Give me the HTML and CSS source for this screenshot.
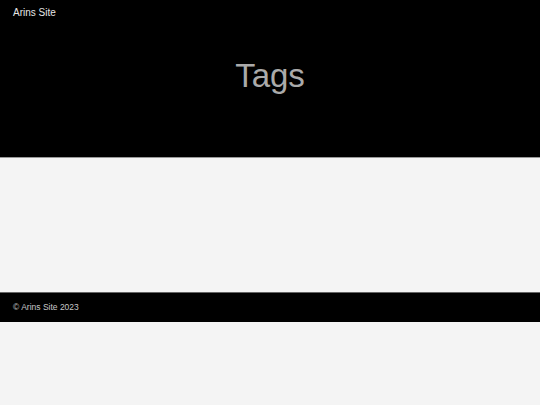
FILE: index.html
```html
<!DOCTYPE html>
<html>
<head>
<meta charset="utf-8">
<link rel="stylesheet" href="styles.css">
</head>
<body>
<header class="site-header">
  <div class="brand">Arins Site</div>
  <h1 class="title">Tags</h1>
</header>
<main class="content"></main>
<footer class="site-footer">© Arins Site 2023</footer>
</body>
</html>
```
FILE: styles.css
```css
html, body {
  margin: 0;
  padding: 0;
  background: #f4f4f4;
  font-family: "Liberation Sans", Arial, sans-serif;
}
.site-header {
  background: #000;
  height: 157px;
  border-bottom: 1px solid #999;
  padding: 0 13px;
  box-sizing: content-box;
}
.brand {
  color: #e6e6e6;
  font-size: 10px;
  line-height: 12px;
  padding-top: 7px;
}
.title {
  margin: 40px 0 0;
  text-align: center;
  color: #aaaaaa;
  font-weight: normal;
  font-size: 33px;
  line-height: 34px;
}
.content {
  display: block;
  height: 134px;
}
.site-footer {
  background: #000;
  color: #c8c8c8;
  font-size: 8.5px;
  height: 29px;
  line-height: 29px;
  border-top: 1px solid #666;
  padding: 0 13px;
}
```
